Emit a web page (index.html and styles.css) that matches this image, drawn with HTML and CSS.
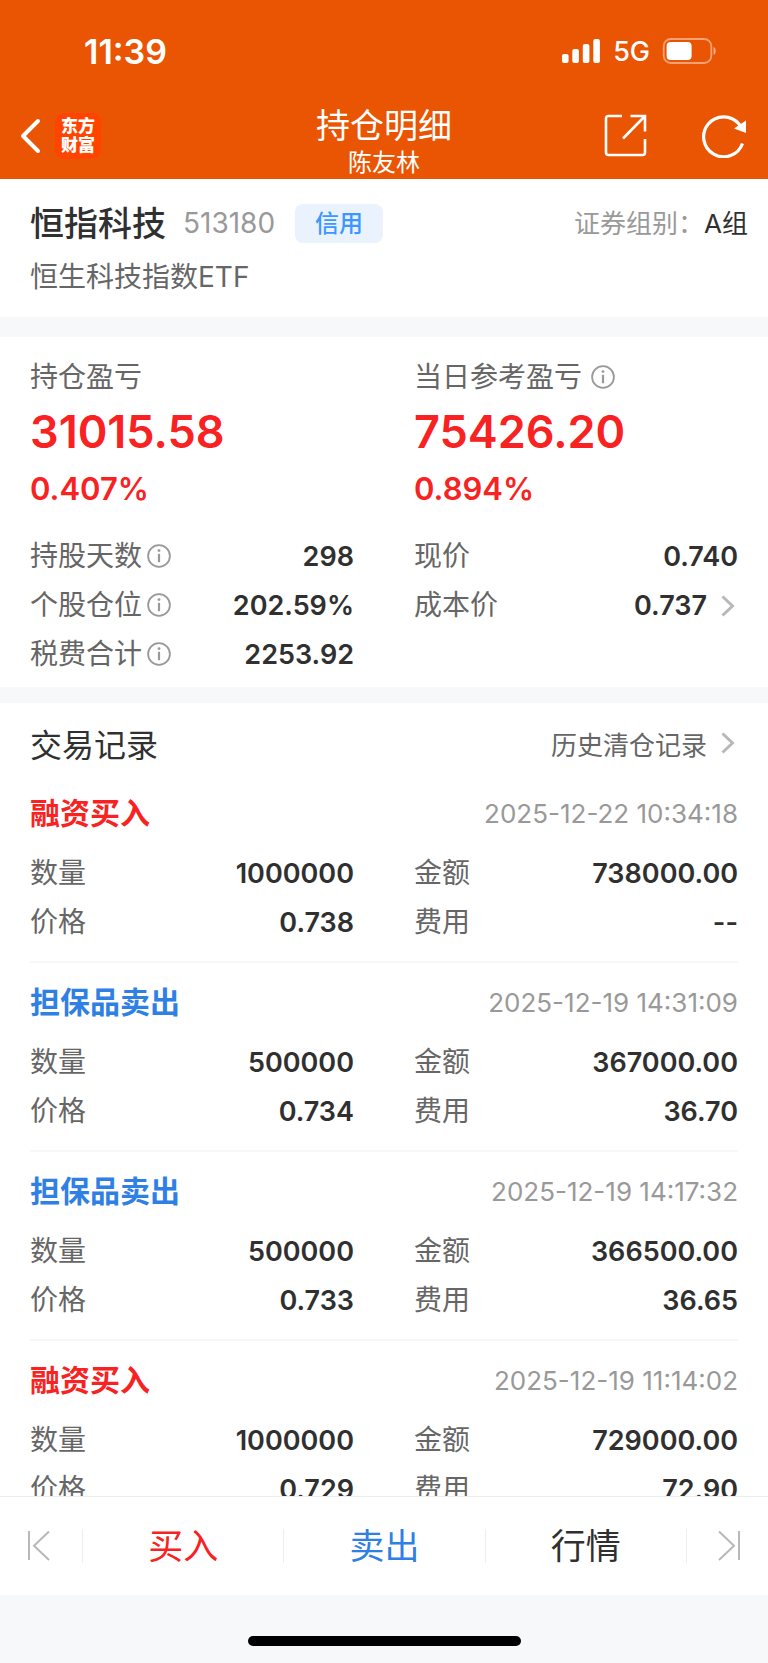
FILE: index.html
```html
<!DOCTYPE html>
<html lang="zh-CN">
<head>
    <meta charset="UTF-8">
    <meta name="viewport" content="width=device-width, initial-scale=1.0">
    <title>持仓明细</title>
    <link rel="stylesheet" href="styles.css">
</head>
<body>
    <!-- shared icons -->
    <svg class="sprite" aria-hidden="true">
        <symbol id="icon-info" viewBox="0 0 24 24">
            <circle cx="12" cy="12" r="10.9" fill="none" stroke="currentColor" stroke-width="1.8"/>
            <circle cx="12" cy="6.6" r="1.4" fill="currentColor"/>
            <path d="M12 9.8v8.4" stroke="currentColor" stroke-width="2.2"/>
        </symbol>
        <symbol id="icon-arrow" viewBox="0 0 14 22">
            <path d="M1.5 1.5L11.5 11L1.5 20.5" fill="none" stroke="currentColor" stroke-width="3"/>
        </symbol>
    </svg>

    <header class="header">
        <div class="status">
            <span class="status-time">11:39</span>
            <div class="status-right">
                <svg width="40" height="26" viewBox="0 0 40 26" fill="#fff">
                    <rect x="1" y="16" width="6.6" height="9" rx="2"/>
                    <rect x="11.3" y="11" width="6.6" height="14" rx="2"/>
                    <rect x="21.8" y="6" width="6.6" height="19" rx="2"/>
                    <rect x="32.3" y="1" width="6.6" height="24" rx="2"/>
                </svg>
                <span class="status-net">5G</span>
                <svg width="56" height="26" viewBox="0 0 56 26">
                    <rect x="1.7" y="1" width="47.6" height="24" rx="7" fill="none" stroke="#fff" stroke-opacity=".45" stroke-width="1.8"/>
                    <rect x="4.6" y="4" width="25" height="18" rx="4" fill="#fff"/>
                    <path d="M51.5 9c3 1 3 7 0 8z" fill="#fff" fill-opacity=".5"/>
                </svg>
            </div>
        </div>
        <nav class="nav">
            <div class="nav-side">
                <button type="button" class="icon-btn" aria-label="返回">
                    <svg width="22" height="36" viewBox="0 0 22 36">
                        <path d="M18 3L3 18l15 15" fill="none" stroke="#fff" stroke-width="4" stroke-linecap="round" stroke-linejoin="round"/>
                    </svg>
                </button>
                <div class="logo">东方<br>财富</div>
            </div>
            <div class="nav-title">
                <h1>持仓明细</h1>
                <p>陈友林</p>
            </div>
            <div class="nav-side nav-actions">
                <button type="button" class="icon-btn" aria-label="分享">
                    <svg width="44" height="44" viewBox="0 0 44 44" fill="none" stroke="#fff" stroke-width="2.6">
                        <path d="M18 2H4.500Q2 2 2 4.500V38.500Q2 41 4.500 41H38.500Q41 41 41 38.500V25"/>
                        <path d="M26.500 2H41V17.500M41 2L19 24.500"/>
                    </svg>
                </button>
                <button type="button" class="icon-btn" aria-label="刷新">
                    <svg width="46" height="44" viewBox="0 0 46 44">
                        <path d="M40.500 29.500A20 20 0 1 1 37 10L39 13" fill="none" stroke="#fff" stroke-width="3.200"/>
                        <path d="M44 6.500V19L32 14.500z" fill="#fff"/>
                    </svg>
                </button>
            </div>
        </nav>
    </header>

    <main class="content">
        <section class="stock">
            <div class="stock-top">
                <h2>恒指科技</h2>
                <span class="stock-code">513180</span>
                <span class="tag">信用</span>
                <p class="stock-group">证券组别：<b>A组</b></p>
            </div>
            <p class="stock-full">恒生科技指数ETF</p>
        </section>

        <section class="position">
            <div class="col">
                <h3>持仓盈亏</h3>
                <p class="profit">31015.58</p>
                <p class="percent">0.407%</p>
                <dl class="rows">
                    <div class="row">
                        <dt>持股天数<button type="button" class="icon-btn info" aria-label="持股天数说明"><svg><use href="#icon-info"/></svg></button></dt>
                        <dd>298</dd>
                    </div>
                    <div class="row">
                        <dt>个股仓位<button type="button" class="icon-btn info" aria-label="个股仓位说明"><svg><use href="#icon-info"/></svg></button></dt>
                        <dd>202.59%</dd>
                    </div>
                    <div class="row">
                        <dt>税费合计<button type="button" class="icon-btn info" aria-label="税费合计说明"><svg><use href="#icon-info"/></svg></button></dt>
                        <dd>2253.92</dd>
                    </div>
                </dl>
            </div>
            <div class="col">
                <h3>当日参考盈亏<button type="button" class="icon-btn info" aria-label="当日参考盈亏说明"><svg><use href="#icon-info"/></svg></button></h3>
                <p class="profit">75426.20</p>
                <p class="percent">0.894%</p>
                <dl class="rows">
                    <div class="row"><dt>现价</dt><dd>0.740</dd></div>
                    <div class="row">
                        <dt>成本价</dt>
                        <dd><a href="#" class="more">0.737<svg class="arrow"><use href="#icon-arrow"/></svg></a></dd>
                    </div>
                </dl>
            </div>
        </section>

        <section class="records">
            <div class="records-head">
                <h2>交易记录</h2>
                <a href="#" class="more">历史清仓记录<svg class="arrow"><use href="#icon-arrow"/></svg></a>
            </div>

            <article class="record">
                <div class="record-head">
                    <h3 class="buy">融资买入</h3>
                    <time>2025-12-22 10:34:18</time>
                </div>
                <dl class="record-data">
                    <div class="row"><dt>数量</dt><dd>1000000</dd></div>
                    <div class="row"><dt>金额</dt><dd>738000.00</dd></div>
                    <div class="row"><dt>价格</dt><dd>0.738</dd></div>
                    <div class="row"><dt>费用</dt><dd>--</dd></div>
                </dl>
            </article>

            <article class="record">
                <div class="record-head">
                    <h3 class="sell">担保品卖出</h3>
                    <time>2025-12-19 14:31:09</time>
                </div>
                <dl class="record-data">
                    <div class="row"><dt>数量</dt><dd>500000</dd></div>
                    <div class="row"><dt>金额</dt><dd>367000.00</dd></div>
                    <div class="row"><dt>价格</dt><dd>0.734</dd></div>
                    <div class="row"><dt>费用</dt><dd>36.70</dd></div>
                </dl>
            </article>

            <article class="record">
                <div class="record-head">
                    <h3 class="sell">担保品卖出</h3>
                    <time>2025-12-19 14:17:32</time>
                </div>
                <dl class="record-data">
                    <div class="row"><dt>数量</dt><dd>500000</dd></div>
                    <div class="row"><dt>金额</dt><dd>366500.00</dd></div>
                    <div class="row"><dt>价格</dt><dd>0.733</dd></div>
                    <div class="row"><dt>费用</dt><dd>36.65</dd></div>
                </dl>
            </article>

            <article class="record">
                <div class="record-head">
                    <h3 class="buy">融资买入</h3>
                    <time>2025-12-19 11:14:02</time>
                </div>
                <dl class="record-data">
                    <div class="row"><dt>数量</dt><dd>1000000</dd></div>
                    <div class="row"><dt>金额</dt><dd>729000.00</dd></div>
                    <div class="row"><dt>价格</dt><dd>0.729</dd></div>
                    <div class="row"><dt>费用</dt><dd>72.90</dd></div>
                </dl>
            </article>
        </section>
    </main>

    <footer class="footer">
        <div class="toolbar">
            <button type="button" class="step" aria-label="上一个">
                <svg width="24" height="32" viewBox="0 0 24 32" fill="none" stroke="#b8b8b8" stroke-width="2">
                    <path d="M2 1v29M22 1.500L7 15.800L22 30"/>
                </svg>
            </button>
            <button type="button" class="buy">买入</button>
            <button type="button" class="sell">卖出</button>
            <button type="button">行情</button>
            <button type="button" class="step" aria-label="下一个">
                <svg width="24" height="32" viewBox="0 0 24 32" fill="none" stroke="#b8b8b8" stroke-width="2">
                    <path d="M22 1v29M2 1.500L17 15.800L2 30"/>
                </svg>
            </button>
        </div>
        <div class="home"><span class="home-bar"></span></div>
    </footer>
</body>
</html>
```
FILE: styles.css
```css
* {
    box-sizing: border-box;
}
body {
    margin: 0;
    height: 100vh;
    display: flex;
    flex-direction: column;
    background-color: #f6f8fa;
    color: #303030;
    font-family: Inter, "Noto Sans CJK SC", sans-serif;
    font-size: 28px;
}
h1, h2, h3, p, dl, dd {
    margin: 0;
}
button {
    border: none;
    background: none;
    padding: 0;
    color: inherit;
    font: inherit;
    cursor: pointer;
}
a {
    color: inherit;
    text-decoration: none;
}
svg {
    display: block;
}
.sprite {
    position: absolute;
    width: 0;
    height: 0;
}
.icon-btn {
    display: flex;
}
.buy {
    color: #f82222;
}
.sell {
    color: #2f80e4;
}

/* header */
.header {
    flex: none;
    background-color: #ea5504;
    color: #ffffff;
}
.status {
    height: 102px;
    padding: 0 50px 0 84px;
    display: flex;
    align-items: center;
    justify-content: space-between;
}
.status-time {
    font-size: 34px;
    font-weight: 600;
}
.status-right {
    display: flex;
    align-items: center;
    gap: 12px;
}
.status-net {
    font-size: 27px;
    font-weight: 500;
}
.nav {
    height: 77px;
    padding: 0 20px;
    display: grid;
    grid-template-columns: 1fr auto 1fr;
}
.nav-side {
    display: flex;
    align-items: center;
    gap: 13px;
    padding-bottom: 9px;
    height: 77px;
}
.nav-actions {
    justify-content: flex-end;
    gap: 54px;
}
.logo {
    width: 46px;
    height: 46px;
    border-radius: 9px;
    background-color: #ff4400;
    padding-top: 4px;
    font-size: 17px;
    font-weight: 900;
    line-height: 19px;
    text-align: center;
}
.nav-title {
    text-align: center;
}
.nav-title h1 {
    font-size: 34px;
    font-weight: 400;
    line-height: 48px;
}
.nav-title p {
    font-size: 24px;
    line-height: 26px;
}

/* stock name */
.stock {
    background-color: #ffffff;
    height: 138px;
    padding: 20px 20px 0 30px;
}
.stock-top {
    display: flex;
    align-items: center;
    height: 48px;
}
.stock-top h2 {
    padding-bottom: 3px;
    font-size: 34px;
    font-weight: 500;
}
.stock-code {
    margin-left: 17px;
    color: #999999;
}
.tag {
    margin-left: 20px;
    padding: 0 20px;
    border-radius: 8px;
    background-color: #eaf2fe;
    color: #3d97ff;
    font-size: 24px;
    font-weight: 500;
    line-height: 39px;
}
.stock-group {
    margin-left: auto;
    padding-bottom: 3px;
    color: #999999;
    font-size: 26px;
}
.stock-group b {
    color: #303030;
    font-weight: 400;
}
.stock-full {
    color: #666666;
    line-height: 60px;
}

/* profit and position */
.content {
    flex: 1;
    min-height: 0;
    overflow-y: auto;
    scrollbar-width: none;
}
.position {
    margin-top: 20px;
    padding: 18px 30px 9px;
    background-color: #ffffff;
    display: grid;
    grid-template-columns: 1fr 1fr;
    gap: 60px;
}
.position h3 {
    display: flex;
    align-items: center;
    gap: 9px;
    color: #666666;
    font-size: 28px;
    font-weight: 400;
    line-height: 44px;
}
.info {
    color: #999999;
}
.info svg {
    width: 24px;
    height: 24px;
}
.profit {
    color: #f82222;
    font-size: 45px;
    font-weight: 600;
    line-height: 66px;
}
.percent {
    color: #f82222;
    font-size: 31px;
    font-weight: 600;
    line-height: 48px;
}
.rows {
    margin-top: 18px;
}
.row {
    display: flex;
    align-items: center;
    justify-content: space-between;
    height: 49px;
}
.row dt {
    display: flex;
    align-items: center;
    gap: 5px;
    color: #666666;
    line-height: 44px;
}
.row dd {
    padding-top: 2px;
    font-size: 27px;
    font-weight: 600;
}
.more {
    display: flex;
    align-items: center;
    gap: 14px;
}
.arrow {
    width: 14px;
    height: 22px;
    margin-right: 3px;
    color: #b8b8b8;
}

/* trade records */
.records {
    margin-top: 16px;
    padding: 0 30px;
    background-color: #ffffff;
}
.records-head {
    display: flex;
    align-items: center;
    justify-content: space-between;
    height: 71px;
    padding-top: 9px;
}
.records-head h2 {
    font-size: 32px;
    font-weight: 400;
}
.records-head .more {
    color: #666666;
    font-size: 26px;
}
.record {
    padding: 19px 0 15px;
    border-bottom: 2px solid #f7f7f8;
}
.record-head {
    display: flex;
    align-items: center;
    justify-content: space-between;
    height: 40px;
    margin-bottom: 15px;
}
.record-head h3 {
    padding-bottom: 4px;
    font-size: 30px;
    font-weight: 700;
}
.record-head time {
    color: #999999;
    font-size: 26px;
}
.record-data {
    display: grid;
    grid-template-columns: 1fr 1fr;
    column-gap: 60px;
}

/* bottom bar */
.footer {
    flex: none;
}
.toolbar {
    display: grid;
    grid-template-columns: 82px 1fr 1fr 1fr 82px;
    align-items: center;
    height: 99px;
    border-top: 1px solid #eeeeee;
    background-color: #ffffff;
}
.toolbar button {
    height: 34px;
    border-left: 1px solid #eeeeee;
    font-size: 35px;
    line-height: 34px;
}
.toolbar .step {
    display: flex;
    align-items: center;
    justify-content: center;
    padding-left: 4px;
}
.toolbar button:first-child {
    border-left: none;
    padding: 0 5px 0 0;
}
.home {
    height: 68px;
    padding-top: 41px;
}
.home-bar {
    display: block;
    width: 36%;
    max-width: 273px;
    height: 10px;
    margin: 0 auto;
    border-radius: 5px;
    background-color: #000000;
}
```
